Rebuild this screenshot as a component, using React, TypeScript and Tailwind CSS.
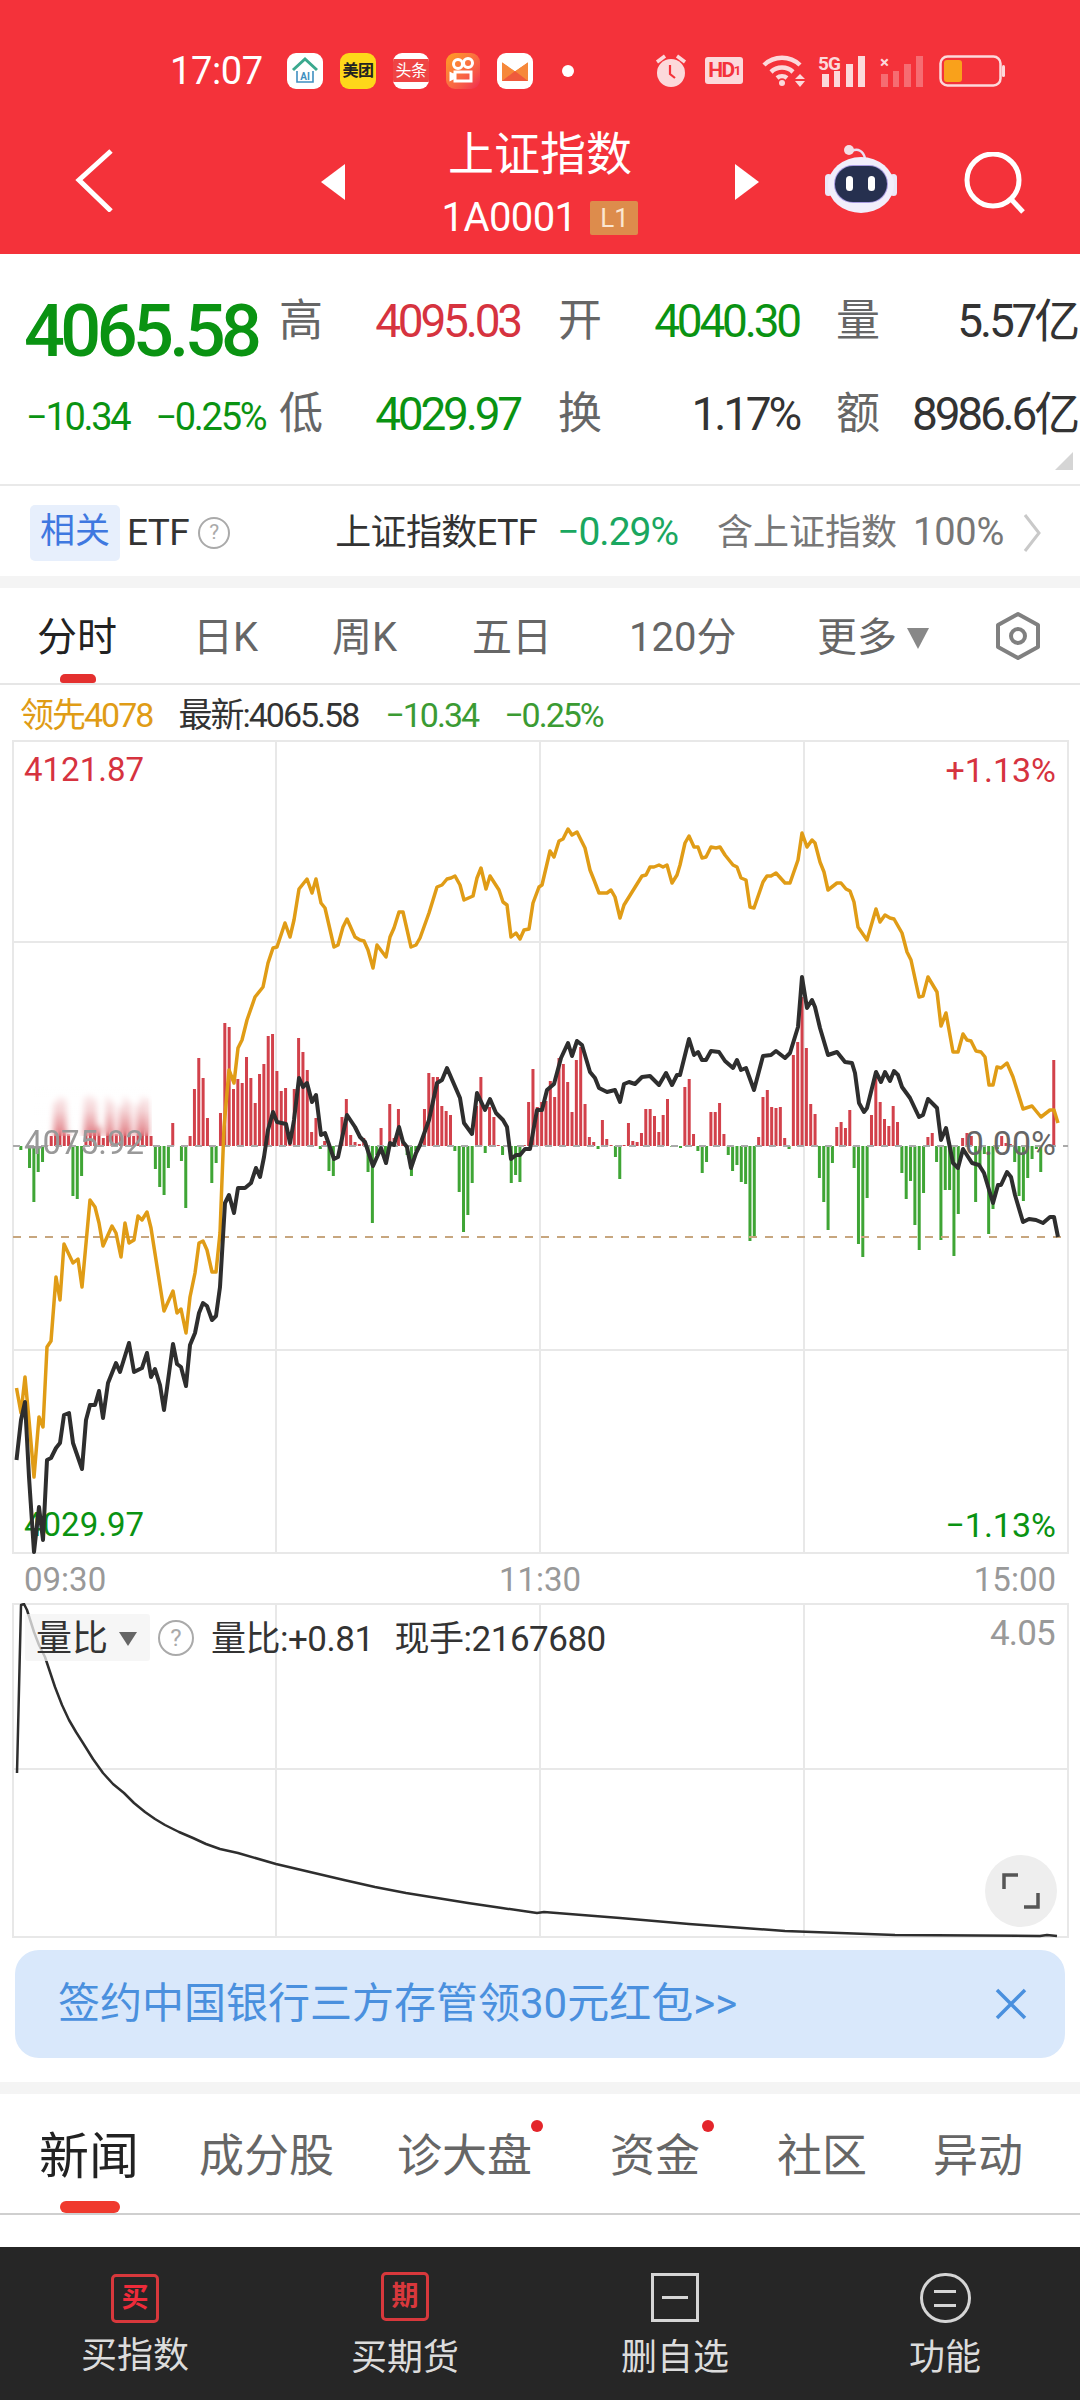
const orangeLine =
  '16.5,1388 21,1413 25,1377 29,1420 34,1477 39,1417 43,1427 47,1347 51,1341 56,1277 60,1300 64,1244 73,1263 78,1259 82,1287 90,1200 95,1207 99,1223 103,1246 112,1226 116,1233 121,1257 125,1223 129,1243 134,1240 138,1216 142,1220 147,1212 151,1228 164,1311 173,1291 177,1313 181,1309 186,1333 190,1297 195,1273 199,1243 203,1241 207,1250 212,1272 216,1272 220,1233 224,1127 229,1070 234,1083 238,1048 242,1040 247,1020 255,997 263,987 268,963 273,948 277,947 285,923 290,937 294,920 299,889 307,879 312,893 316,879 321,903 325,908 334,947 338,945 343,927 347,919 355,937 360,940 364,941 368,950 373,968 377,945 386,957 390,937 394,928 399,912 403,912 411,947 416,945 420,938 429,913 437,887 442,885 447,879 451,878 455,876 460,885 464,900 473,896 477,878 481,868 486,889 490,876 499,890 503,902 507,905 511,937 516,933 520,939 524,930 529,929 533,903 539,887 542,885 550,851 554,857 559,841 563,839 568,829 572,835 577,832 585,848 590,870 594,880 599,893 607,893 611,890 615,897 620,918 624,905 642,876 646,875 650,867 654,867 659,865 663,867 667,865 672,883 677,875 680,865 685,843 689,836 694,847 698,847 702,858 706,857 711,847 716,848 720,847 725,855 733,865 737,867 741,878 746,880 750,907 754,908 763,882 767,876 771,876 776,873 785,883 790,883 798,860 802,833 807,847 812,840 815,843 820,862 824,872 828,890 837,883 841,883 846,889 850,891 854,902 858,927 867,940 876,909 880,922 885,915 890,918 894,919 902,933 907,952 911,960 919,997 923,996 928,977 937,992 941,1026 946,1013 953,1052 958,1052 963,1034 967,1040 971,1041 976,1051 981,1052 985,1057 989,1085 993,1085 997,1067 1001,1068 1007,1063 1013,1077 1023,1109 1032,1106 1041,1117 1050,1110 1054,1110 1058,1123'

const blackLine =
  '16.5,1460 21,1420 25,1402 29,1477 34,1552 39,1507 43,1540 47,1460 51,1458 56,1448 60,1443 64,1415 69,1413 73,1443 82,1469 86,1420 90,1405 95,1405 99,1391 103,1418 108,1383 116,1363 120,1372 129,1343 134,1372 142,1368 147,1353 151,1377 155,1369 160,1385 164,1410 173,1344 177,1364 181,1367 186,1386 190,1345 195,1333 199,1313 203,1303 207,1306 212,1320 216,1316 220,1287 225,1203 229,1195 234,1213 238,1188 245,1188 251,1183 256,1168 260,1177 264,1157 268,1130 273,1112 277,1122 286,1124 290,1143 294,1120 299,1078 303,1087 307,1083 312,1102 316,1095 321,1135 325,1133 334,1159 338,1157 347,1115 355,1127 360,1137 365,1142 373,1166 381,1148 386,1163 390,1143 394,1145 399,1127 403,1142 407,1147 411,1168 416,1153 420,1145 429,1120 437,1083 442,1080 447,1068 460,1098 464,1123 472,1134 477,1093 485,1110 490,1099 496,1113 503,1120 507,1127 511,1159 516,1155 520,1155 525,1149 530,1149 537,1110 542,1110 547,1090 554,1084 561,1058 568,1043 572,1056 577,1041 582,1045 590,1072 595,1078 599,1088 607,1092 615,1090 620,1102 624,1084 629,1082 635,1084 642,1077 650,1076 659,1085 666,1073 672,1085 677,1075 680,1075 689,1039 694,1055 698,1052 702,1060 706,1060 711,1051 719,1052 725,1061 733,1068 737,1060 741,1070 746,1068 754,1090 763,1056 771,1055 776,1051 785,1058 790,1053 798,1027 802,977 807,1008 812,1000 815,1007 820,1028 828,1055 837,1052 845,1062 852,1063 855,1073 859,1103 864,1112 867,1108 876,1072 881,1082 885,1072 890,1081 894,1071 898,1075 902,1087 910,1098 919,1117 923,1115 928,1099 937,1108 941,1140 946,1128 953,1163 958,1168 963,1149 972,1163 979,1165 984,1173 993,1203 998,1185 1001,1185 1007,1172 1011,1177 1015,1195 1023,1222 1029,1219 1036,1220 1043,1223 1050,1217 1054,1217 1058,1237'

const ratioLine =
  '17,1773 21,1605 24,1604 27,1610 34,1632 39,1645 45,1657 50,1672 55,1687 62,1705 69,1720 76,1732 83,1743 93,1759 103,1773 113,1784 124,1793 134,1803 145,1812 155,1819 165,1825 179,1832 193,1838 206,1844 220,1849 238,1853 276,1864 310,1872 344,1880 375,1887 406,1893 437,1898 468,1903 502,1908 537,1913 544,1912 620,1918 689,1924 785,1931 895,1935 1040,1936 1047,1935 1057,1936'

const bars = [
  0, -4, 0, -22, -56, -26, -16, 1, 10, 45, 50, 48, 12, -50, -53, -30, 50, 52, 48, 20, 8, 50, 45, 12, 40, 50, 45, 10, 42, 50, 48, 10,
  -23, -41, -49, -22, 23, 0, -15, -62, 10, 57, 88, 68, 28, -37, -17, 33, 123, 119, 57, 67, 63, 89, 68, 43, 72, 82, 110, 112, 75, 55, 58, 3,
  57, 108, 94, 76, 14, 28, -3, 5, -25, -30, 1, 29, 47, 11, 4, 2, 8, -26, -77, -9, 18, -9, 42, 8, 37, 3, -9, -30, -5, 2, 37, 73,
  69, 69, 40, 35, 31, -5, -46, -86, -69, -37, 40, 69, -7, 39, 29, 1, -9, 1, -37, -29, -36, 1, 44, 77, 39,
  44, 45, 65, 49, 88, 82, 64, 34, 86, 99, 42, 9, 4, -3, 26, 7, 1, -11, -33, 1, 23, 5, 4, 13, 37, 37, 30, 14, 31, 47, -1, -1, -2, 59, 67, 12,
  -5, -27, -16, 34, 34, 43, 12, -9, -25, -19, -36, -38, -95, -90, 9, 49, 56, 39, 38, 39, 8, -3, 91, 104, 149, 98, 42, 32, -32, -56, -84, -17,
  19, 24, 18, 36, -22, -98, -111, -52, 31, 69, 44, 27, 20, 40, 24, -27, -53, -35, -79, -104, -47, 9, 13, -16, -94, -44, -44, -110, -68, 8, 13, 10,
  -56, -20, -8, -88, -63, -3, 10, 3, 2, -16, -50, -55, -32, -13, -3, -26, 0, 0, 86,
]

const AppIcons = () => (
  <div className="flex items-center gap-[17px]">
    <div className="flex h-[36px] w-[36px] items-center justify-center rounded-[9px] bg-white">
      <svg viewBox="0 0 36 36" className="h-[36px] w-[36px]">
        <path d="M6 17 18 6l12 11" fill="none" stroke="#3aa98e" strokeWidth="3" />
        <path d="M10 18v11h16V18" fill="none" stroke="#3f8fc0" strokeWidth="1.6" />
        <text x="18" y="27" textAnchor="middle" fontSize="10" fontWeight="700" fill="#3f8fc0">AI</text>
      </svg>
    </div>
    <div className="flex h-[36px] w-[36px] items-center justify-center rounded-[9px] bg-[#fed71a] text-[16px] font-bold leading-none tracking-[-0.5px] text-[#222]">
      美团
    </div>
    <div className="flex h-[36px] w-[36px] items-center overflow-hidden rounded-[9px] bg-white">
      <div className="flex h-[23px] w-full items-center justify-center bg-[#ee4444] text-[16px] leading-none tracking-[-0.5px] text-white">头条</div>
    </div>
    <div className="flex h-[36px] w-[34px] items-center justify-center rounded-[9px] bg-gradient-to-br from-[#ff9f1c] to-[#f0244f]">
      <svg viewBox="0 0 34 36" className="h-[36px] w-[34px]" fill="none" stroke="#fff" strokeWidth="3">
        <circle cx="12" cy="11" r="4.5" />
        <circle cx="22" cy="10" r="4.5" />
        <path d="M9 19h16v9H9zM9 23l-4-2v5l4-2" />
      </svg>
    </div>
    <div className="flex h-[36px] w-[36px] items-center justify-center rounded-[9px] bg-white">
      <svg viewBox="0 0 36 36" className="h-[36px] w-[36px]">
        <path d="M5 9l13 9L31 9v19H5z" fill="#f6883a" />
        <path d="M5 28 18 18l13 10z" fill="#ef5a3c" />
        <path d="M5 9l13 9L31 9z" fill="#fff" />
      </svg>
    </div>
  </div>
)

const SystemIcons = () => (
  <div className="ml-auto flex items-center pr-[74px]">
    <svg viewBox="0 0 32 34" className="h-[34px] w-[32px]" fill="#fcd9db">
      <circle cx="16" cy="19" r="14" />
      <path d="M2 8 10 2M30 8l-8-6" stroke="#fcd9db" strokeWidth="3.5" fill="none" />
      <path d="M15 11v9l5 4" stroke="#f4323a" strokeWidth="2.2" fill="none" />
    </svg>
    <div className="ml-[18px] flex h-[27px] w-[38px] items-center justify-center rounded-[3px] bg-[#fcd9db] text-[21px] font-bold leading-none tracking-[-1.5px] text-[#f4323a]">
      HD<span className="text-[13px]">1</span>
    </div>
    <svg viewBox="0 0 44 33" className="ml-[19px] h-[33px] w-[44px]" fill="none" stroke="#fcd9db" strokeWidth="4.5">
      <path d="M2 11a26 26 0 0 1 36 0M9 18a16 16 0 0 1 22 0M15 24a8 8 0 0 1 10 0" />
      <circle cx="20" cy="29" r="3" fill="#fcd9db" stroke="none" />
      <path d="M38 20l5 5h-10zM38 33l5-6h-10z" fill="#fcd9db" stroke="none" />
    </svg>
    <div className="relative ml-[12px] h-[33px] w-[48px]">
      <svg viewBox="0 0 48 33" className="h-[33px] w-[48px]" fill="#fcd9db">
        <rect x="4" y="20" width="7" height="13" />
        <rect x="16" y="17" width="6" height="16" />
        <rect x="28" y="10" width="7" height="23" />
        <rect x="40" y="2" width="7" height="31" />
      </svg>
      <span className="absolute left-0 top-0 text-[19px] font-bold leading-none tracking-[-1px] text-[#fcd9db]">5G</span>
    </div>
    <div className="relative ml-[14px] h-[33px] w-[45px]">
      <svg viewBox="0 0 45 33" className="h-[33px] w-[45px]" fill="#fcd9db">
        <g opacity=".35">
          <rect x="1" y="20" width="7" height="13" />
          <rect x="13" y="17" width="6" height="16" />
          <rect x="24" y="10" width="7" height="23" />
          <rect x="36" y="2" width="7" height="31" />
        </g>
      </svg>
      <span className="absolute left-0 top-0 text-[17px] font-bold leading-none text-[#fcd9db]">×</span>
    </div>
    <svg viewBox="0 0 67 32" className="ml-[14px] h-[32px] w-[67px]">
      <rect x="1.5" y="1.5" width="60" height="29" rx="7" fill="none" stroke="#fcd9db" strokeWidth="2.5" />
      <rect x="5" y="5" width="18" height="22" rx="3" fill="#f9a11b" />
      <rect x="63" y="10" width="3" height="12" rx="1.5" fill="#fcd9db" />
    </svg>
  </div>
)

const Header = () => (
  <div className="h-[254px] shrink-0 bg-[#f4323a] text-white">
    <div className="flex h-[140px] items-center pl-[170px] pt-[1px]">
      <span className="w-[117px] text-[38px] leading-none tracking-[-0.4px]">17:07</span>
      <AppIcons />
      <span className="ml-[29px] h-[12px] w-[12px] rounded-full bg-white" />
      <SystemIcons />
    </div>
    <div className="-mt-[9px] flex items-start">
      <svg viewBox="0 0 40 64" className="ml-[74px] mt-[17px] h-[64px] w-[40px]" fill="none" stroke="#fff" strokeWidth="5">
        <path d="M37 2 5 31l32 31" transform="translate(0 1)" />
      </svg>
      <svg viewBox="0 0 24 36" className="ml-[207px] mt-[33px] h-[36px] w-[24px]" fill="#fff">
        <path d="M24 0v36L0 18z" />
      </svg>
      <div className="ml-[26px] -mt-[5px] flex w-[338px] flex-col items-center">
        <div className="text-[46px] leading-[56px]">上证指数</div>
        <div className="mt-[18px] flex items-center">
          <span className="text-[40px] leading-[36px] tracking-[-0.6px]">1A0001</span>
          <span className="ml-[14px] flex h-[34px] w-[48px] items-center justify-center rounded-[2px] bg-[#dd8c4c] text-[26px] leading-none text-[#fbe6d2]">L1</span>
        </div>
      </div>
      <svg viewBox="0 0 24 36" className="ml-[26px] mt-[33px] h-[36px] w-[24px]" fill="#fff">
        <path d="M0 0v36l24-18z" />
      </svg>
      <svg viewBox="0 0 72 68" className="ml-[66px] mt-[14px] h-[68px] w-[72px]">
        <path d="M27 6c6-3 11 0 13 7" fill="none" stroke="#eadff2" strokeWidth="2.5" />
        <circle cx="24" cy="5" r="5" fill="#f3dfe6" />
        <rect x="0" y="29" width="7" height="22" rx="3.5" fill="#ece7f7" />
        <rect x="65" y="29" width="7" height="22" rx="3.5" fill="#ece7f7" />
        <ellipse cx="36" cy="40" rx="33" ry="28" fill="#f1eefb" />
        <rect x="9" y="20" width="54" height="38" rx="19" fill="#a89be0" />
        <rect x="10" y="21" width="52" height="36" rx="18" fill="#26304f" />
        <rect x="21" y="31" width="7" height="15" rx="3.5" fill="#fff" />
        <rect x="43" y="31" width="7" height="15" rx="3.5" fill="#fff" />
      </svg>
      <svg viewBox="0 0 62 62" className="ml-[67px] mt-[21px] h-[62px] w-[62px]" fill="none" stroke="#fff" strokeWidth="5">
        <circle cx="29" cy="28" r="26" />
        <path d="m47 47 12 13" />
      </svg>
    </div>
  </div>
)

const Stat = ({ label, value, color }: { label: string; value: string; color: string }) => (
  <div className="flex w-[241px] items-center justify-between">
    <span className="text-[44px] leading-none text-[#666]">{label}</span>
    <span className={`text-[46px] leading-none tracking-[-3.2px] ${color}`}>{value}</span>
  </div>
)

const Quote = () => (
  <div className="relative h-[232px] shrink-0 border-b-[2px] border-[#e9e9e9] pt-[20px]">
    <div className="grid h-[93px] grid-cols-[279px_279px_278px_244px] items-center">
      <div className="pl-[24px] pt-[22px] text-[72px] font-medium leading-none tracking-[-4.6px] text-[#0a9312]">4065.58</div>
      <Stat label="高" value="4095.03" color="text-[#d6333f]" />
      <Stat label="开" value="4040.30" color="text-[#0a9312]" />
      <Stat label="量" value="5.57亿" color="text-[#333]" />
    </div>
    <div className="grid h-[93px] grid-cols-[279px_279px_278px_244px] items-center">
      <div className="flex gap-[26px] pl-[26px] pt-[6px] text-[38px] leading-none tracking-[-2.3px] text-[#0a9312]">
        <span>−10.34</span>
        <span>−0.25%</span>
      </div>
      <Stat label="低" value="4029.97" color="text-[#0a9312]" />
      <Stat label="换" value="1.17%" color="text-[#333]" />
      <Stat label="额" value="8986.6亿" color="text-[#333]" />
    </div>
    <svg viewBox="0 0 18 18" className="absolute bottom-[14px] right-[7px] h-[18px] w-[18px]" fill="#d5d5d5">
      <path d="M18 0v18H0z" />
    </svg>
  </div>
)

const QuestionMark = ({ size }: { size: string }) => (
  <span className={`flex items-center justify-center rounded-full border-[2px] border-[#aaa] leading-none text-[#aaa] ${size}`}>?</span>
)

const EtfRow = () => (
  <div className="flex h-[90px] shrink-0 items-center pt-[3px]">
    <span className="ml-[30px] flex h-[56px] w-[90px] items-center justify-center rounded-[5px] bg-[#e7effc] text-[35px] text-[#3f78e0]">相关</span>
    <span className="ml-[7px] text-[37px] tracking-[-0.6px] text-[#333]">ETF</span>
    <span className="ml-[9px]"><QuestionMark size="h-[32px] w-[32px] text-[21px]" /></span>
    <span className="ml-[105px] text-[36px] tracking-[-0.6px] text-[#333]">上证指数ETF</span>
    <span className="ml-[20px] text-[39px] tracking-[-1px] text-[#1aa760]">−0.29%</span>
    <span className="ml-[39px] text-[36px] text-[#777]">含上证指数</span>
    <span className="ml-[16px] text-[38px] tracking-[-0.2px] text-[#777]">100%</span>
    <svg viewBox="0 0 18 38" className="ml-[19px] h-[38px] w-[18px]" fill="none" stroke="#c9c9c9" strokeWidth="3">
      <path d="m2 1 14 18L2 37" />
    </svg>
  </div>
)

const KlineTabs = () => (
  <div className="relative grid h-[97px] shrink-0 grid-cols-[159px_136px_140px_157px_188px_auto] items-center border-b-[2px] border-[#e6e6e6] pl-[37px] pt-[4px] text-[40px] leading-none text-[#666]">
    <span className="text-[#222]">分时</span>
    <span className="-ml-[3px]">日K</span>
    <span>周K</span>
    <span>五日</span>
    <span>120分</span>
    <div className="flex items-center">
      <span>更多</span>
      <svg viewBox="0 0 24 24" className="ml-[9px] h-[24px] w-[24px]" fill="#888"><path d="M1 2h22L12 23z" /></svg>
      <svg viewBox="0 0 50 50" className="ml-[63px] -mt-[4px] h-[50px] w-[50px]" fill="none" stroke="#808080" strokeWidth="4">
        <path d="M25 3 45 14v22L25 47 5 36V14z" strokeLinejoin="round" />
        <circle cx="25" cy="25" r="7" />
      </svg>
    </div>
    <span className="absolute bottom-0 left-[60px] h-[9px] w-[36px] rounded-t-[5px] rounded-b-[3px] bg-[#e4302f]" />
  </div>
)

const Legend = () => (
  <div className="flex h-[55px] shrink-0 items-center pl-[20px] pt-[4px] text-[34px] leading-none tracking-[-2px]">
    <span className="text-[#e09c16]">领先4078</span>
    <span className="ml-[26px] text-[#333]">最新:4065.58</span>
    <span className="ml-[27px] text-[#3b9b33]">−10.34</span>
    <span className="ml-[26px] text-[#3b9b33]">−0.25%</span>
  </div>
)

const GridLines = ({ top, bottom, rows }: { top: number; bottom: number; rows: number[] }) => (
  <g stroke="#e8e8e8" strokeWidth="2">
    <rect x="13" y={top} width="1055" height={bottom - top} fill="none" />
    {[276, 540, 804].map((x) => (
      <line key={x} x1={x} x2={x} y1={top} y2={bottom} />
    ))}
    {rows.map((y) => (
      <line key={y} x1={13} x2={1068} y1={y} y2={y} />
    ))}
  </g>
)

const PriceChart = () => (
  <div className="relative h-[814px] shrink-0 text-[33px] leading-[36px]">
    <svg viewBox="0 740 1080 814" className="block h-[814px] w-[1080px]" fill="none">
      <GridLines top={741} bottom={1553} rows={[942, 1350]} />
      {bars.map((v, i) =>
        v === 0 ? null : (
          <rect
            key={i}
            x={15 + i * 4.34}
            y={v > 0 ? 1146 - v : 1146}
            width="3"
            height={Math.abs(v)}
            fill={v > 0 ? '#d2414b' : '#3fa535'}
          />
        ),
      )}
      <line x1="13" x2="1068" y1="1146" y2="1146" stroke="#aaa" strokeWidth="2" strokeDasharray="7 7" />
      <line x1="13" x2="1068" y1="1237" y2="1237" stroke="#c7a67e" strokeWidth="2" strokeDasharray="8 8" />
    </svg>
    <div className="absolute left-[34px] top-[346px] h-[50px] w-[118px] bg-gradient-to-b from-white via-white/65 to-white/0 backdrop-blur-[3px]" />
    <span className="absolute left-[24px] top-[12px] text-[#d6333f]">4121.87</span>
    <span className="absolute right-[24px] top-[12px] text-[34px] text-[#d6333f]">+1.13%</span>
    <span className="absolute left-[24px] top-[385px] text-[#999]">4075.92</span>
    <span className="absolute right-[24px] top-[385px] text-[34px] text-[#666]">0.00%</span>
    <span className="absolute left-[24px] top-[767px] text-[#0a9312]">4029.97</span>
    <span className="absolute right-[24px] top-[767px] text-[34px] text-[#0a9312]">−1.13%</span>
    <svg viewBox="0 740 1080 814" className="absolute left-0 top-0 h-[814px] w-[1080px]" fill="none">
      <polyline points={orangeLine} stroke="#e09c16" strokeWidth="3.5" strokeLinejoin="round" />
      <polyline points={blackLine} stroke="#2e2e2e" strokeWidth="4" strokeLinejoin="round" />
    </svg>
  </div>
)

const TimeAxis = () => (
  <div className="flex h-[49px] shrink-0 items-center justify-between px-[24px] pt-[1px] text-[33px] leading-none text-[#999]">
    <span>09:30</span>
    <span>11:30</span>
    <span>15:00</span>
  </div>
)

const RatioChart = () => (
  <div className="relative h-[335px] shrink-0">
    <svg viewBox="0 1603 1080 335" className="block h-[335px] w-[1080px]" fill="none">
      <GridLines top={1604} bottom={1937} rows={[1769]} />
      <polyline points={ratioLine} stroke="#2e2e2e" strokeWidth="2.5" strokeLinejoin="round" />
    </svg>
    <div className="absolute left-[25px] top-[11px] flex h-[47px] w-[125px] items-center rounded-[3px] bg-[#f3f3f3]/75 pl-[11px] pt-[3px] text-[36px] leading-none text-[#333]">
      量比
      <svg viewBox="0 0 18 14" className="ml-[11px] h-[14px] w-[18px]" fill="#666"><path d="M0 0h18L9 14z" /></svg>
    </div>
    <div className="absolute left-[158px] top-[17px]">
      <QuestionMark size="h-[36px] w-[36px] text-[24px]" />
    </div>
    <div className="absolute left-[211px] top-[18px] flex h-[36px] items-center gap-[21px] text-[35px] leading-none tracking-[-0.5px] text-[#333]">
      <span>量比:+0.81</span>
      <span>现手:2167680</span>
    </div>
    <span className="absolute right-[25px] top-[13px] text-[35px] leading-none tracking-[-0.8px] text-[#999]">4.05</span>
    <div className="absolute left-[985px] top-[252px] flex h-[72px] w-[72px] items-center justify-center rounded-full bg-[#eeeeee]">
      <svg viewBox="0 0 38 38" className="h-[38px] w-[38px]" fill="none" stroke="#555" strokeWidth="3.5">
        <path d="M2 17V3h14M36 21v14H22" />
      </svg>
    </div>
  </div>
)

const Banner = () => (
  <div className="h-[144px] shrink-0 px-[15px] pt-[12px]">
    <div className="flex h-[108px] items-center justify-between rounded-[24px] bg-[#d9e8fb] pl-[43px] pr-[38px] text-[42px] leading-none text-[#4a90de]">
      <span>签约中国银行三方存管领30元红包&gt;&gt;</span>
      <svg viewBox="0 0 32 32" className="h-[32px] w-[32px]" fill="none" stroke="#4a90de" strokeWidth="3.5">
        <path d="m2 2 28 28M30 2 2 30" />
      </svg>
    </div>
  </div>
)

const NewsTabs = () => (
  <div className="relative grid h-[121px] shrink-0 grid-cols-[160px_198px_213px_167px_156px_auto] items-center border-b-[2px] border-[#cfcfcf] pl-[39px] pt-[6px] text-[45px] leading-none text-[#666]">
    <span className="text-[50px] text-[#222]">新闻</span>
    <span>成分股</span>
    <span className="relative w-fit">
      诊大盘
      <i className="absolute -right-[11px] -top-[14px] h-[12px] w-[12px] rounded-full bg-[#e4252b]" />
    </span>
    <span className="relative w-fit">
      资金
      <i className="absolute -right-[14px] -top-[14px] h-[12px] w-[12px] rounded-full bg-[#e4252b]" />
    </span>
    <span>社区</span>
    <span>异动</span>
    <span className="absolute bottom-0 left-[60px] h-[12px] w-[60px] rounded-full bg-[#f03a2e]" />
  </div>
)

const BottomBar = () => (
  <div className="grid h-[153px] shrink-0 grid-cols-4 bg-[#262626] text-[36px] leading-none text-[#dcdcdc]">
    <div className="flex flex-col items-center pt-[27px]">
      <span className="flex h-[49px] w-[48px] items-center justify-center rounded-[5px] border-[3px] border-[#d8383c] text-[27px] font-bold leading-none text-[#ee2b3a]">买</span>
      <span className="mt-[15px]">买指数</span>
    </div>
    <div className="flex flex-col items-center pt-[25px]">
      <span className="flex h-[49px] w-[48px] items-center justify-center rounded-[5px] border-[3px] border-[#d8383c] text-[27px] font-bold leading-none text-[#d8383c]">期</span>
      <span className="mt-[19px]">买期货</span>
    </div>
    <div className="flex flex-col items-center pt-[26px]">
      <span className="flex h-[49px] w-[48px] items-center justify-center border-[3px] border-[#d5d5d5]">
        <i className="h-[3px] w-[26px] bg-[#d5d5d5]" />
      </span>
      <span className="mt-[18px]">删自选</span>
    </div>
    <div className="flex flex-col items-center pt-[26px]">
      <span className="flex h-[50px] w-[51px] flex-col items-center justify-center gap-[11px] rounded-full border-[3px] border-[#d5d5d5]">
        <i className="h-[3px] w-[22px] bg-[#d5d5d5]" />
        <i className="h-[3px] w-[22px] bg-[#d5d5d5]" />
      </span>
      <span className="mt-[17px]">功能</span>
    </div>
  </div>
)

const App = () => {
  return (
    <div className="flex h-[2400px] w-[1080px] flex-col overflow-hidden bg-white font-['Roboto','Noto_Sans_CJK_SC',sans-serif]">
      <Header />
      <Quote />
      <EtfRow />
      <div className="h-[12px] shrink-0 bg-[#f4f4f4]" />
      <KlineTabs />
      <Legend />
      <PriceChart />
      <TimeAxis />
      <RatioChart />
      <Banner />
      <div className="h-[12px] shrink-0 bg-[#f4f4f4]" />
      <NewsTabs />
      <div className="h-[32px] shrink-0" />
      <BottomBar />
    </div>
  )
}

export default App
